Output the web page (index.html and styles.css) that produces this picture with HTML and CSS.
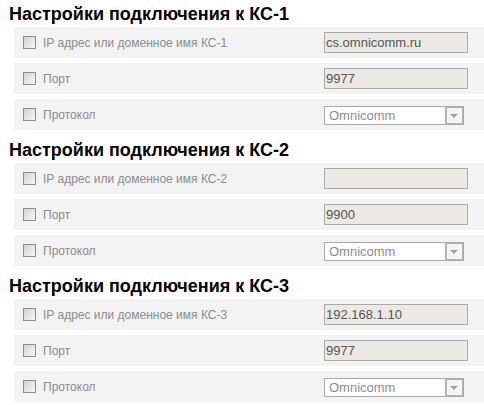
FILE: index.html
```html
<!DOCTYPE html>
<html lang="ru">
<head>
    <meta charset="UTF-8">
    <title>Настройки подключения</title>
    <link rel="stylesheet" href="styles.css">
</head>
<body>
<div class="page">
    <div class="section">
        <h2>Настройки подключения к КС-1</h2>
        <div class="row">
            <input type="checkbox" class="chk">
            <label class="name">IP адрес или доменное имя КС-1</label>
            <input type="text" class="field" value="cs.omnicomm.ru">
        </div>
        <div class="row">
            <input type="checkbox" class="chk">
            <label class="name">Порт</label>
            <input type="text" class="field" value="9977">
        </div>
        <div class="row">
            <input type="checkbox" class="chk">
            <label class="name">Протокол</label>
            <div class="select">
                <span class="select-value">Omnicomm</span>
                <span class="select-arrow"></span>
            </div>
        </div>
    </div>

    <div class="section">
        <h2>Настройки подключения к КС-2</h2>
        <div class="row">
            <input type="checkbox" class="chk">
            <label class="name">IP адрес или доменное имя КС-2</label>
            <input type="text" class="field" value="">
        </div>
        <div class="row">
            <input type="checkbox" class="chk">
            <label class="name">Порт</label>
            <input type="text" class="field" value="9900">
        </div>
        <div class="row">
            <input type="checkbox" class="chk">
            <label class="name">Протокол</label>
            <div class="select">
                <span class="select-value">Omnicomm</span>
                <span class="select-arrow"></span>
            </div>
        </div>
    </div>

    <div class="section">
        <h2>Настройки подключения к КС-3</h2>
        <div class="row">
            <input type="checkbox" class="chk">
            <label class="name">IP адрес или доменное имя КС-3</label>
            <input type="text" class="field" value="192.168.1.10">
        </div>
        <div class="row">
            <input type="checkbox" class="chk">
            <label class="name">Порт</label>
            <input type="text" class="field" value="9977">
        </div>
        <div class="row">
            <input type="checkbox" class="chk">
            <label class="name">Протокол</label>
            <div class="select">
                <span class="select-value">Omnicomm</span>
                <span class="select-arrow"></span>
            </div>
        </div>
    </div>
</div>
</body>
</html>
```

FILE: styles.css
```css
body {
    margin: 0;
    background: #fff;
    font-family: "Liberation Sans", Arial, sans-serif;
    color: #333;
}

.page {
    padding: 4px 0 0 9px;
}

.section + .section {
    margin-top: 10px;
}

h2 {
    margin: 0 0 3px;
    font-size: 18px;
    line-height: 20px;
    font-weight: bold;
    color: #000;
}

.row {
    display: flex;
    align-items: center;
    height: 31px;
    margin-left: 5px;
    margin-bottom: 5px;
    background: #f3f3f3;
}
.row:last-child {
    margin-bottom: 0;
}

.chk {
    appearance: none;
    -webkit-appearance: none;
    box-sizing: border-box;
    width: 13px;
    height: 13px;
    margin: 0 7px 0 9px;
    border: 1px solid #8e8e8e;
    background: linear-gradient(135deg, #d2d2d2, #f8f8f8); /* серый градиент как в старом IE */
    flex: none;
}

.name {
    width: 281px;
    font-size: 12px;
    color: #8c8c8c;
    flex: none;
}

.field {
    box-sizing: border-box;
    width: 144px;
    height: 21px;
    margin: 0;
    padding: 0 1px;
    border: 1px solid #a9a9a9;
    background: #ebe9e3;
    font-family: "Liberation Sans", Arial, sans-serif;
    font-size: 13px;
    color: #555;
    outline: none;
}

.select {
    box-sizing: border-box;
    display: flex;
    width: 140px;
    height: 19px;
    margin-top: 1px;
    border: 1px solid #a9a9a9;
    background: #fff;
}

.select-value {
    flex: 1;
    padding-left: 4px;
    font-size: 13px;
    line-height: 17px;
    color: #8c8c8c;
}

.select-arrow {
    box-sizing: border-box;
    position: relative;
    width: 18px;
    border: 1px solid #b4b4b4;
    border-left-width: 2px;
    background: #f4f4f4;
}
.select-arrow::after {
    content: "";
    position: absolute;
    left: 3px;
    top: 6px;
    border-left: 4px solid transparent;
    border-right: 4px solid transparent;
    border-top: 4px solid #a0a0a0;
}
```
